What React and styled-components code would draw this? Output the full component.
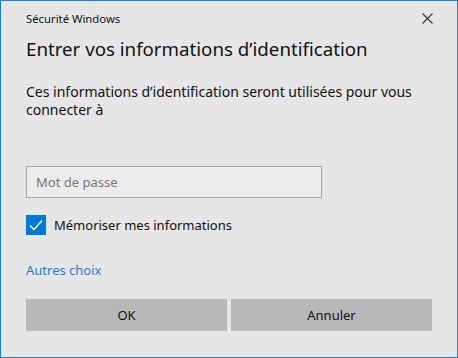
import React from "react";
import styled, { createGlobalStyle } from "styled-components";

const Global = createGlobalStyle`
  html, body { margin: 0; padding: 0; background: #e6e6e6; }
  body { font-family: "Noto Sans", "Open Sans", sans-serif; }
`;

const Window = styled.div`
  box-sizing: border-box;
  width: 458px;
  height: 358px;
  border: 1px solid #1883d7;
  background: #e6e6e6;
  display: flex;
  flex-direction: column;
  padding: 0 25px 0 25px;
  color: #000;
`;

const TitleBar = styled.div`
  display: flex;
  align-items: center;
  justify-content: space-between;
  height: 34px;
  font-size: 11.3px;
  color: #111;
`;

const Close = styled.button`
  border: 0;
  background: none;
  padding: 0;
  margin-right: -8px;
  width: 26px;
  height: 26px;
  display: flex;
  align-items: center;
  justify-content: center;
`;

const Heading = styled.h1`
  margin: 0;
  font-weight: 400;
  font-size: 18.7px;
  line-height: 28px;
  color: #111;
`;

const Body = styled.p`
  margin: 20px 0 0;
  font-size: 14px;
  line-height: 18px;
  color: #111;
`;

const Input = styled.input`
  box-sizing: border-box;
  margin-top: 47px;
  width: 296px;
  height: 32px;
  border: 1px solid #a6a6a6;
  background: #ececec;
  padding: 0 9px;
  font: inherit;
  font-size: 13px;
  color: #111;
  outline: none;
  &::placeholder { color: #767676; }
`;

const CheckRow = styled.label`
  margin-top: 17px;
  display: flex;
  align-items: center;
  gap: 8px;
  font-size: 13px;
  color: #111;
`;

const Box = styled.span`
  width: 20px;
  height: 20px;
  background: #0078d7;
  display: flex;
  align-items: center;
  justify-content: center;
`;

const Link = styled.a`
  margin-top: 26px;
  font-size: 13px;
  line-height: 18px;
  color: #1a7fd6;
  text-decoration: none;
`;

const Buttons = styled.div`
  margin-top: 20px;
  display: grid;
  grid-template-columns: 1fr 1fr;
  gap: 4px;
`;

const Button = styled.button`
  height: 32px;
  border: 0;
  background: #b8b8b8;
  font: inherit;
  font-size: 13px;
  color: #111;
`;

export default function App() {
  return (
    <>
      <Global />
      <Window>
        <TitleBar>
          <span>Sécurité Windows</span>
          <Close aria-label="Fermer">
            <svg width="11" height="11" viewBox="0 0 11 11">
              <path d="M0.5 0.5L10.5 10.5M10.5 0.5L0.5 10.5" stroke="#333" strokeWidth="1.1" />
            </svg>
          </Close>
        </TitleBar>
        <Heading>Entrer vos informations d’identification</Heading>
        <Body>
          Ces informations d’identification seront utilisées pour vous
          <br />
          connecter à
        </Body>
        <Input placeholder="Mot de passe" type="password" />
        <CheckRow>
          <Box>
            <svg width="16" height="16" viewBox="0 0 16 16">
              <path d="M2 8.5L6 12.5L14 3.5" fill="none" stroke="#fff" strokeWidth="1.4" />
            </svg>
          </Box>
          Mémoriser mes informations
        </CheckRow>
        <Link href="#">Autres choix</Link>
        <Buttons>
          <Button>OK</Button>
          <Button>Annuler</Button>
        </Buttons>
      </Window>
    </>
  );
}
